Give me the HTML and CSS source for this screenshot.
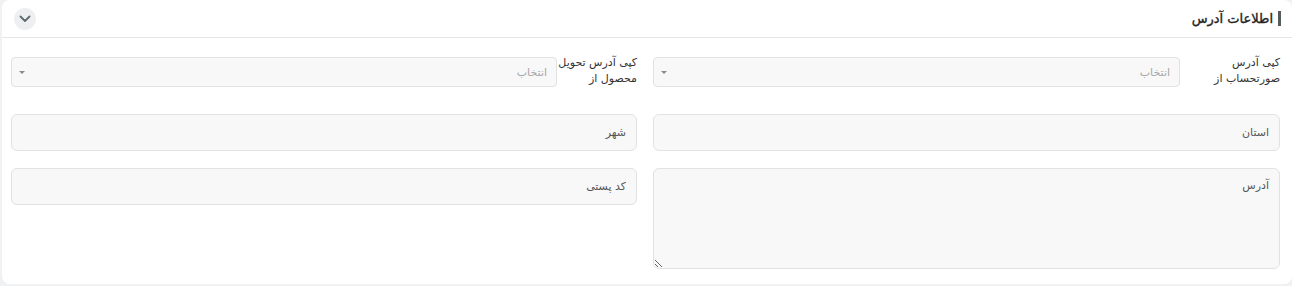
FILE: index.html
```html
<!DOCTYPE html>
<html lang="fa" dir="rtl">
<head>
<meta charset="utf-8">
<link rel="stylesheet" href="styles.css">
</head>
<body>
<div class="card">
  <div class="card-header">
    <div class="title">اطلاعات آدرس</div>
    <button class="toggle" type="button" aria-label="toggle">
      <svg width="12" height="8" viewBox="0 0 12 8"><path d="M1.5 1.5 L6 6 L10.5 1.5" fill="none" stroke="#5f6b6b" stroke-width="1.8" stroke-linecap="round" stroke-linejoin="round"/></svg>
    </button>
  </div>
  <div class="card-body">
    <div class="row row-select">
      <div class="field-inline">
        <label class="inline-label label-wide">کپی آدرس<br>صورتحساب از</label>
        <div class="select"><span class="select-ph">انتخاب</span><span class="caret"></span></div>
      </div>
      <div class="field-inline">
        <label class="inline-label label-narrow">کپی آدرس تحویل<br>محصول از</label>
        <div class="select"><span class="select-ph">انتخاب</span><span class="caret"></span></div>
      </div>
    </div>
    <div class="row row-inputs">
      <input class="input" placeholder="استان">
      <input class="input" placeholder="شهر">
    </div>
    <div class="row row-last">
      <textarea class="input textarea" placeholder="آدرس"></textarea>
      <div class="col"><input class="input" placeholder="کد پستی"></div>
    </div>
  </div>
</div>
</body>
</html>
```

FILE: styles.css
```css
* { box-sizing: border-box; }
html, body { margin: 0; padding: 0; }
body {
  background: #f0f1f3;
  font-family: "DejaVu Sans", "Noto Sans", sans-serif;
  color: #333;
  width: 1292px;
  height: 286px;
  overflow: hidden;
}
.card {
  width: 1290px;
  height: 284px;
  background: #fff;
  border-radius: 8px;
}
.card-header {
  height: 38px;
  border-bottom: 1px solid #e6e6e6;
  display: flex;
  align-items: center;
  justify-content: space-between;
  padding: 0 11px 0 12px;
}
.title {
  font-size: 13px;
  font-weight: normal;
  -webkit-text-stroke: 0.35px #222;
  color: #222;
  border-right: 3px solid #555c5c;
  padding-right: 5px;
  line-height: 15px;
}
.toggle {
  width: 22px;
  height: 22px;
  border-radius: 50%;
  border: none;
  background: #eeeff0;
  padding: 0;
  display: flex;
  align-items: center;
  justify-content: center;
  margin-top: 1px;
}
.card-body {
  padding: 19px 12px 0 11px;
}
.row {
  display: grid;
  grid-template-columns: 627px 626px;
  column-gap: 16px;
}
.row-inputs { margin-top: 27px; }
.row-last { margin-top: 17px; align-items: start; }
.field-inline {
  display: flex;
  align-items: flex-start;
}
.inline-label {
  font-size: 11px;
  line-height: 16px;
  color: #333;
  padding-top: 0;
  margin-top: -2px;
}
.label-wide { width: 100px; flex: none; }
.label-narrow { width: 80px; flex: none; }
.select {
  flex: 1;
  height: 30px;
  background: #f8f8f8;
  border: 1px solid #e2e2e2;
  border-radius: 4px;
  display: flex;
  align-items: center;
  justify-content: space-between;
  padding: 0 9px 0 7px;
}
.select-ph {
  font-size: 11px;
  color: #a8a8a8;
}
.caret {
  width: 0;
  height: 0;
  border-left: 3px solid transparent;
  border-right: 3px solid transparent;
  border-top: 3px solid #8a8a8a;
}
.input {
  display: block;
  width: 100%;
  height: 37px;
  background: #f8f8f8;
  border: 1px solid #e2e2e2;
  border-radius: 6px;
  font-family: "DejaVu Sans", "Noto Sans", sans-serif;
  font-size: 11px;
  padding: 0 10px;
  color: #333;
  outline: none;
}
.input::placeholder { color: #555; opacity: 1; }
.textarea {
  height: 101px;
  padding: 10px 10px;
  resize: vertical;
}
```
